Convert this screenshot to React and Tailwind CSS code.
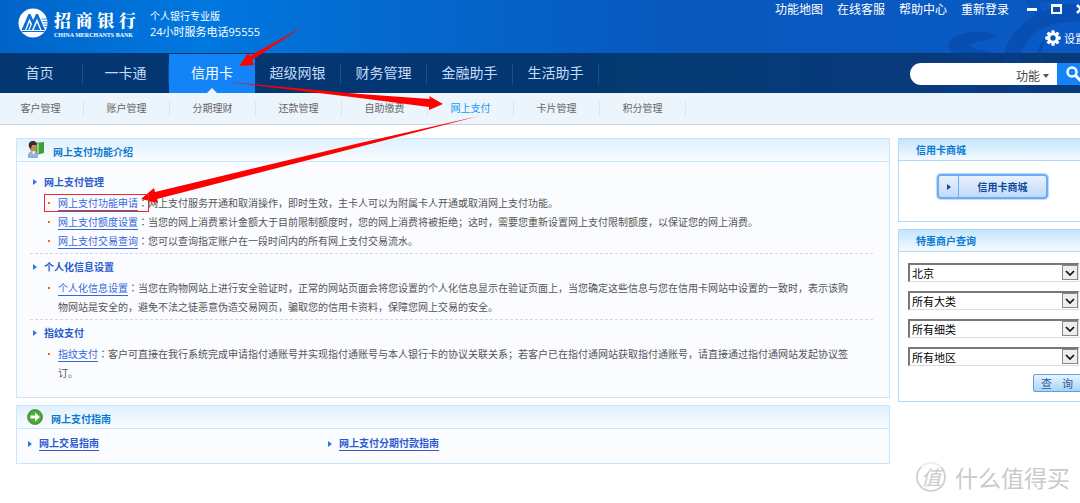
import React from "react";

const navItems = ["首页", "一卡通", "信用卡", "超级网银", "财务管理", "金融助手", "生活助手"];

const subItems = ["客户管理", "账户管理", "分期理财", "还款管理", "自助缴费", "网上支付", "卡片管理", "积分管理"];

const topLinks = ["功能地图", "在线客服", "帮助中心", "重新登录"];

const merchantFilters = [
  { id: "city", label: "城市", value: "北京" },
  { id: "category", label: "大类", value: "所有大类" },
  { id: "subcategory", label: "细类", value: "所有细类" },
  { id: "area", label: "地区", value: "所有地区" },
];

const sections = [
  {
    title: "网上支付管理",
    items: [
      { link: "网上支付功能申请", lines: ["网上支付服务开通和取消操作，即时生效，主卡人可以为附属卡人开通或取消网上支付功能。"] },
      { link: "网上支付额度设置", lines: ["当您的网上消费累计金额大于目前限制额度时，您的网上消费将被拒绝；这时，需要您重新设置网上支付限制额度，以保证您的网上消费。"] },
      { link: "网上支付交易查询", lines: ["您可以查询指定账户在一段时间内的所有网上支付交易流水。"] },
    ],
  },
  {
    title: "个人化信息设置",
    items: [
      {
        link: "个人化信息设置",
        lines: [
          "当您在购物网站上进行安全验证时，正常的网站页面会将您设置的个人化信息显示在验证页面上，当您确定这些信息与您在信用卡网站中设置的一致时，表示该购",
          "物网站是安全的，避免不法之徒恶意伪造交易网页，骗取您的信用卡资料，保障您网上交易的安全。",
        ],
      },
    ],
  },
  {
    title: "指纹支付",
    items: [
      {
        link: "指纹支付",
        lines: [
          "客户可直接在我行系统完成申请指付通账号并实现指付通账号与本人银行卡的协议关联关系；若客户已在指付通网站获取指付通账号，请直接通过指付通网站发起协议签",
          "订。",
        ],
      },
    ],
  },
];

const BankLogo = () => (
  <svg className="h-[30px] w-[30px]" viewBox="0 0 30 30" aria-hidden="true">
    <circle cx="15" cy="15" r="14.5" fill="#fff" />
    <path d="M3.5 22 L10.5 6 H12.500 L15.200 12 L18 6 H20 L27 22 Z" fill="#0a6ed2" />
    <path d="M7 22 L11.500 10.500 L14 16 L11.500 22 H10.300 L12.500 16.500 L11.500 14.500 L8.300 22 Z" fill="#fff" />
    <path d="M14 22 L19 10.500 L23.500 22 H22.200 L19 14.500 L15.600 22 Z" fill="#fff" />
    <path d="M3.500 23.500 H26.500" stroke="#0a6ed2" strokeWidth="1" />
    <path d="M23.500 11 H29 M24.500 13.500 H29.500 M25.500 16 H29.500 M26.500 18.500 H29" stroke="#0a6ed2" strokeWidth="0.8" />
  </svg>
);

const GearIcon = () => (
  <svg className="h-4 w-4" viewBox="0 0 16 16" aria-hidden="true">
    <g fill="#fff">
      {[0, 45, 90, 135].map((deg) => (
        <rect key={deg} x="6.300" y="0.300" width="3.400" height="15.400" rx="0.8" transform={`rotate(${deg} 8 8)`} />
      ))}
      <circle cx="8" cy="8" r="5.800" />
    </g>
    <circle cx="8" cy="8" r="2.700" fill="#0a55b8" />
  </svg>
);

const UserIcon = () => (
  <svg className="h-[18px] w-[18px]" viewBox="0 0 18 18" aria-hidden="true">
    <path d="M7 2 L17 1 V12 L9 14 Z" fill="#3f9d3c" />
    <path d="M10 3 L12 2 V12 L10 13 Z" fill="#8fd486" />
    <path d="M1 17 C0 12 3 10 6 10 C10 10 11 13 11 17 Z" fill="#8eb4dd" />
    <path d="M5 10 L6.500 14 L8 10 Z" fill="#fff" />
    <ellipse cx="6" cy="6" rx="3.500" ry="4.500" fill="#c08a5c" />
    <path d="M2 6 C1 2 3 0 6 0 C9 0 10 2 9.500 4 L5 4 L4 8 Z" fill="#3c2c22" />
  </svg>
);

const GuideIcon = () => (
  <svg className="h-4 w-4" viewBox="0 0 16 16" aria-hidden="true">
    <circle cx="8" cy="8" r="7.500" fill="#3e9b30" stroke="#6d8f68" />
    <circle cx="8" cy="8" r="6" fill="#4bb03a" />
    <path d="M3.500 6.500 H8 V3.500 L13 8 L8 12.500 V9.500 H3.500 Z" fill="#fff" />
  </svg>
);

const Caret = () => (
  <svg className="h-2 w-1 shrink-0" viewBox="0 0 4 8" aria-hidden="true">
    <path d="M0 1 L4 4 L0 7 Z" fill="#2a78e4" />
  </svg>
);

const HeaderPattern = () => (
  <svg className="pointer-events-none absolute right-0 top-0 h-[93px] w-[160px]" viewBox="0 0 160 93" aria-hidden="true">
    <g fill="#05409a" opacity="0.400">
      <path d="M105 0 H136 Q122 6 118 0 Q126 14 122 25 Q112 12 105 0 Z" opacity="0.600" />
      <path d="M28 45 C32 31 66 28 77 36 C70 41 56 40 48 46 C56 51 72 49 75 55 C60 62 30 58 28 45 Z" />
      <path d="M160 4 C124 2 86 28 82 62 C82 76 86 86 94 93 H112 C98 74 96 60 104 46 C114 28 136 20 160 22 Z" />
      <path d="M126 38 C112 50 116 64 128 70 C122 60 120 48 126 38 Z" />
      <path d="M20 93 C30 80 60 78 72 86 C60 86 52 88 50 93 Z" />
    </g>
  </svg>
);

const Header = () => (
  <header className="relative bg-[linear-gradient(90deg,#0064c8_0px,#0078e0_200px,#0468cd_400px,#0858bd_680px,#0a5ac6_100%)]">
    <div className="flex h-[53px] justify-between overflow-hidden">
      <div className="flex items-start pl-[18px] pt-2 text-white">
        <BankLogo />
        <div className="ml-[6px] w-[82px]">
          <div className="flex justify-between font-['Noto_Serif_CJK_SC','Noto_Sans_CJK_SC',serif] text-[17px] leading-[24px] font-black">
            <span>招</span><span>商</span><span>银</span><span>行</span>
          </div>
          <div className="whitespace-nowrap font-['Liberation_Serif',serif] text-[6px] leading-[6px] font-bold">CHINA MERCHANTS BANK</div>
        </div>
        <div className="ml-[14px] font-['Open_Sans','Noto_Sans_CJK_SC',sans-serif]">
          <div className="text-[10px] leading-[16px]">个人银行专业版</div>
          <div className="text-[11px] leading-[16px]">24小时服务电话95555</div>
        </div>
      </div>
      <div className="z-10 text-[12px] leading-[18px] text-white">
        <div className="flex items-center gap-[14px]">
          {topLinks.map((link) => (
            <a key={link} href="#" className="whitespace-nowrap">{link}</a>
          ))}
          <div className="-mr-[6px] ml-1 flex gap-[14px]">
            <button aria-label="最小化" className="h-[18px] w-[10px]"><span className="block h-[3px] w-full bg-white" /></button>
            <button aria-label="最大化" className="mt-1 h-[10px] w-[11px] border-2 border-t-[3px] border-white" />
            <button aria-label="关闭">
              <svg className="h-[10px] w-[10px]" viewBox="0 0 10 10"><path d="M1 1 L9 9 M9 1 L1 9" stroke="#fff" strokeWidth="2.500" /></svg>
            </button>
          </div>
        </div>
        <a href="#" className="-mr-[6px] mt-[11px] flex items-center justify-end gap-[3px] text-[11px]">
          <GearIcon />设置
        </a>
      </div>
    </div>
    <nav className="flex h-10 items-center justify-between border-t border-[#05386f] bg-[linear-gradient(90deg,#043672_0px,#043672_598px,#033b70_599px,#083a7c_850px)]">
      <ul className="-ml-[3px] flex h-full shrink-0">
        {navItems.map((item) =>
          item === "信用卡" ? (
            <li key={item} className="relative flex w-[86px] items-center justify-center bg-[#1284f7] text-[14px] text-white">
              <a href="#" className="pb-[2px]">{item}</a>
              <span className="absolute bottom-0 left-[38px] h-0 w-0 border-x-[5px] border-b-[5px] border-x-transparent border-b-[#ecf4fc]" />
            </li>
          ) : (
            <li key={item} className="flex w-[86px] items-center justify-center text-[14px] text-[#c3dcf7]">
              <a href="#" className="flex h-5 w-full items-center justify-center border-r border-[#1c4f8c] pb-[2px]">{item}</a>
            </li>
          )
        )}
      </ul>
      <form className="z-10 flex h-[22px] items-stretch">
        <input aria-label="搜索" className="w-[106px] rounded-l-full bg-white" />
        <button type="button" className="flex w-[41px] items-center gap-[3px] bg-white pt-1 text-[12px] leading-[18px] text-[#444]">
          功能
          <svg className="h-1 w-[6px]" viewBox="0 0 6 4" aria-hidden="true"><path d="M0 0 H6 L3 4 Z" fill="#555" /></svg>
        </button>
        <button type="button" aria-label="查找" className="w-[23px] overflow-hidden bg-[#1284f7] pl-[9px]">
          <svg className="h-4 w-4" viewBox="0 0 16 16"><circle cx="6" cy="6" r="4.500" fill="none" stroke="#fff" strokeWidth="2.500" /><path d="M9 9 L15 15" stroke="#fff" strokeWidth="3" /></svg>
        </button>
      </form>
    </nav>
    <HeaderPattern />
  </header>
);

const SubNav = () => (
  <nav className="h-8 border-b border-[#ccd6de] bg-[#ecf4fc]">
    <ul className="-ml-[2px] flex h-full items-center">
      {subItems.map((item) => (
        <li key={item} className="flex h-4 w-[86px] shrink-0 items-center justify-center border-r border-[#dbe5ee] pb-[2px]">
          <a href="#" className={item === "网上支付" ? "text-[#109af4]" : "text-[#666]"}>{item}</a>
        </li>
      ))}
    </ul>
  </nav>
);

const Panel = ({ title, icon, children }) => (
  <section className="border border-[#c8e6fd] bg-[#fbfcff]">
    <h2 className="flex h-[23px] items-center gap-2 border-b border-[#c8e6fd] bg-linear-to-b from-[#e0f1fd] to-[#f8fcff] pl-[10px] font-bold text-[#0a7ad1]">
      {icon}
      <span className="pt-[3px]">{title}</span>
    </h2>
    {children}
  </section>
);

const SidePanel = ({ title, children }) => (
  <section className="overflow-hidden border border-r-0 border-[#b0dbfc] bg-white">
    <h2 className="h-[22px] border-b border-[#b0dbfc] bg-linear-to-b from-[#c4e5fd] to-[#f4faff] pl-[17px] leading-[22px] font-bold text-[#0a7ad1]">
      {title}
    </h2>
    {children}
  </section>
);

const IntroSection = ({ section }) => (
  <div className="border-b border-dashed border-[#d8d8d8] pb-[3px] pt-[2px] last:border-0">
    <h3 className="flex items-center gap-[7px] pl-[3px] leading-[22px] font-bold text-[#2c5bce]">
      <Caret />
      {section.title}
    </h3>
    <ul className="whitespace-nowrap pl-[28px] leading-[19px] text-[#555]">
      {section.items.map((item) => (
        <li key={item.link} className="relative">
          <span className="absolute -left-[10px] top-[9px] h-[2px] w-[2px] bg-[#f60]" />
          <a href="#" className="border-b border-[#3567d8] text-[#3567d8]">{item.link}</a>
          <span lang="zh-TW" className="font-['Noto_Sans_CJK_TC',sans-serif]">：</span>
          {item.lines.map((line, i) => (
            <React.Fragment key={line}>
              {i > 0 && <br />}
              {line}
            </React.Fragment>
          ))}
        </li>
      ))}
    </ul>
  </div>
);

const GuideLink = ({ children }) => (
  <a href="#" className="flex items-center gap-[7px] font-bold leading-[14px] text-[#2c5bce]">
    <Caret />
    <span className="border-b border-[#2c5bce]">{children}</span>
  </a>
);

// red arrows walking through the menu path
const Annotations = () => (
  <svg className="pointer-events-none absolute left-0 top-0 h-[220px] w-[520px]" viewBox="0 0 520 220" aria-hidden="true">
    <g fill="#fe0000">
      <path d="M304 26 L252 60 L254 65 L239 66 L248 53 L250 56 Z" />
      <path d="M228 82 L360 94 L430 99 L429 96 L443 104 L429 110 L429 107 L360 98 Z" />
      <path d="M479 116 L157 199 L158 203 L141 199 L154 188 L155 192 L360 143 Z" />
    </g>
    <rect x="44.500" y="194.500" width="104" height="17" fill="none" stroke="#f02828" />
  </svg>
);

const Watermark = () => (
  <div className="absolute right-[10px] top-[462px] flex items-center gap-[9px] text-[#cacaca]">
    <span className="flex h-[30px] w-[30px] items-center justify-center rounded-full border-2 border-t-[#eee] border-[#d2d2d2] text-[20px] leading-none italic">值</span>
    <span className="text-[23px] leading-[30px]">什么值得买</span>
  </div>
);

const App = () => {
  return (
    <div lang="zh-CN" className="relative overflow-hidden bg-white pb-[39px] font-['Noto_Sans_CJK_SC',sans-serif] text-[10px]">
      <Header />
      <SubNav />
      <main className="flex items-start gap-2 pl-4 pt-[13px]">
        <div className="flex min-w-0 flex-1 flex-col gap-[7px]">
          <Panel title="网上支付功能介绍" icon={<UserIcon />}>
            <div className="ml-[13px] mr-4 pb-3 pt-[7px]">
              {sections.map((section) => (
                <IntroSection key={section.title} section={section} />
              ))}
            </div>
          </Panel>
          <Panel title="网上支付指南" icon={<GuideIcon />}>
            <div className="grid grid-cols-[300px_1fr] pb-3 pl-[11px] pt-[7px]">
              <GuideLink>网上交易指南</GuideLink>
              <GuideLink>网上支付分期付款指南</GuideLink>
            </div>
          </Panel>
        </div>
        <aside className="flex w-[182px] shrink-0 flex-col gap-[7px]">
          <SidePanel title="信用卡商城">
            <div className="pb-[22px] pl-[38px] pt-[13px]">
              <button className="flex h-[25px] w-[111px] items-stretch rounded-[4px] border-2 border-[#6caef5] bg-linear-to-b from-[#eaf2fd] to-[#c2d9f6] font-bold text-[#0d4a9c] shadow-[0_0_1px_1px_#b8d9fb]">
                <span className="flex w-5 items-center justify-center border-r border-[#6caef5]">
                  <svg className="h-[6px] w-1" viewBox="0 0 4 6" aria-hidden="true"><path d="M0 0 L4 3 L0 6 Z" fill="#0d4a9c" /></svg>
                </span>
                <span className="flex flex-1 items-center justify-center">信用卡商城</span>
              </button>
            </div>
          </SidePanel>
          <SidePanel title="特惠商户查询">
            <form className="pb-[9px] pl-[9px] pt-[11px]">
              <div className="flex flex-col gap-[9px]">
                {merchantFilters.map((filter) => (
                  <label key={filter.id} htmlFor={filter.id} className="relative block w-[171px]">
                    <select
                      id={filter.id}
                      aria-label={filter.label}
                      className="block h-[19px] w-full appearance-none border-2 border-b border-r border-b-[#ddd] border-l-[#777] border-r-[#ddd] border-t-[#777] bg-white pl-[2px] text-[11px] leading-[15px] text-black"
                    >
                      <option>{filter.value}</option>
                    </select>
                    <span className="pointer-events-none absolute right-px top-[2px] flex h-[15px] w-4 items-center justify-center border border-[#888] bg-[#eee]">
                      <svg className="h-[6px] w-[10px]" viewBox="0 0 10 6" aria-hidden="true"><path d="M1 1 L5 5 L9 1" fill="none" stroke="#111" strokeWidth="1.700" /></svg>
                    </span>
                  </label>
                ))}
              </div>
              <button type="button" className="ml-[125px] mt-2 block h-[18px] w-[54px] rounded-[2px] border border-[#5e9fdc] bg-linear-to-b from-[#e8f4fe] to-[#a8d3f8] text-left text-[11px] leading-[16px] text-[#31619c]">
                <span className="flex justify-start gap-[10px] pl-[7px]"><span>查</span><span>询</span></span>
              </button>
            </form>
          </SidePanel>
        </aside>
      </main>
      <Annotations />
      <Watermark />
    </div>
  );
};

export default App;
